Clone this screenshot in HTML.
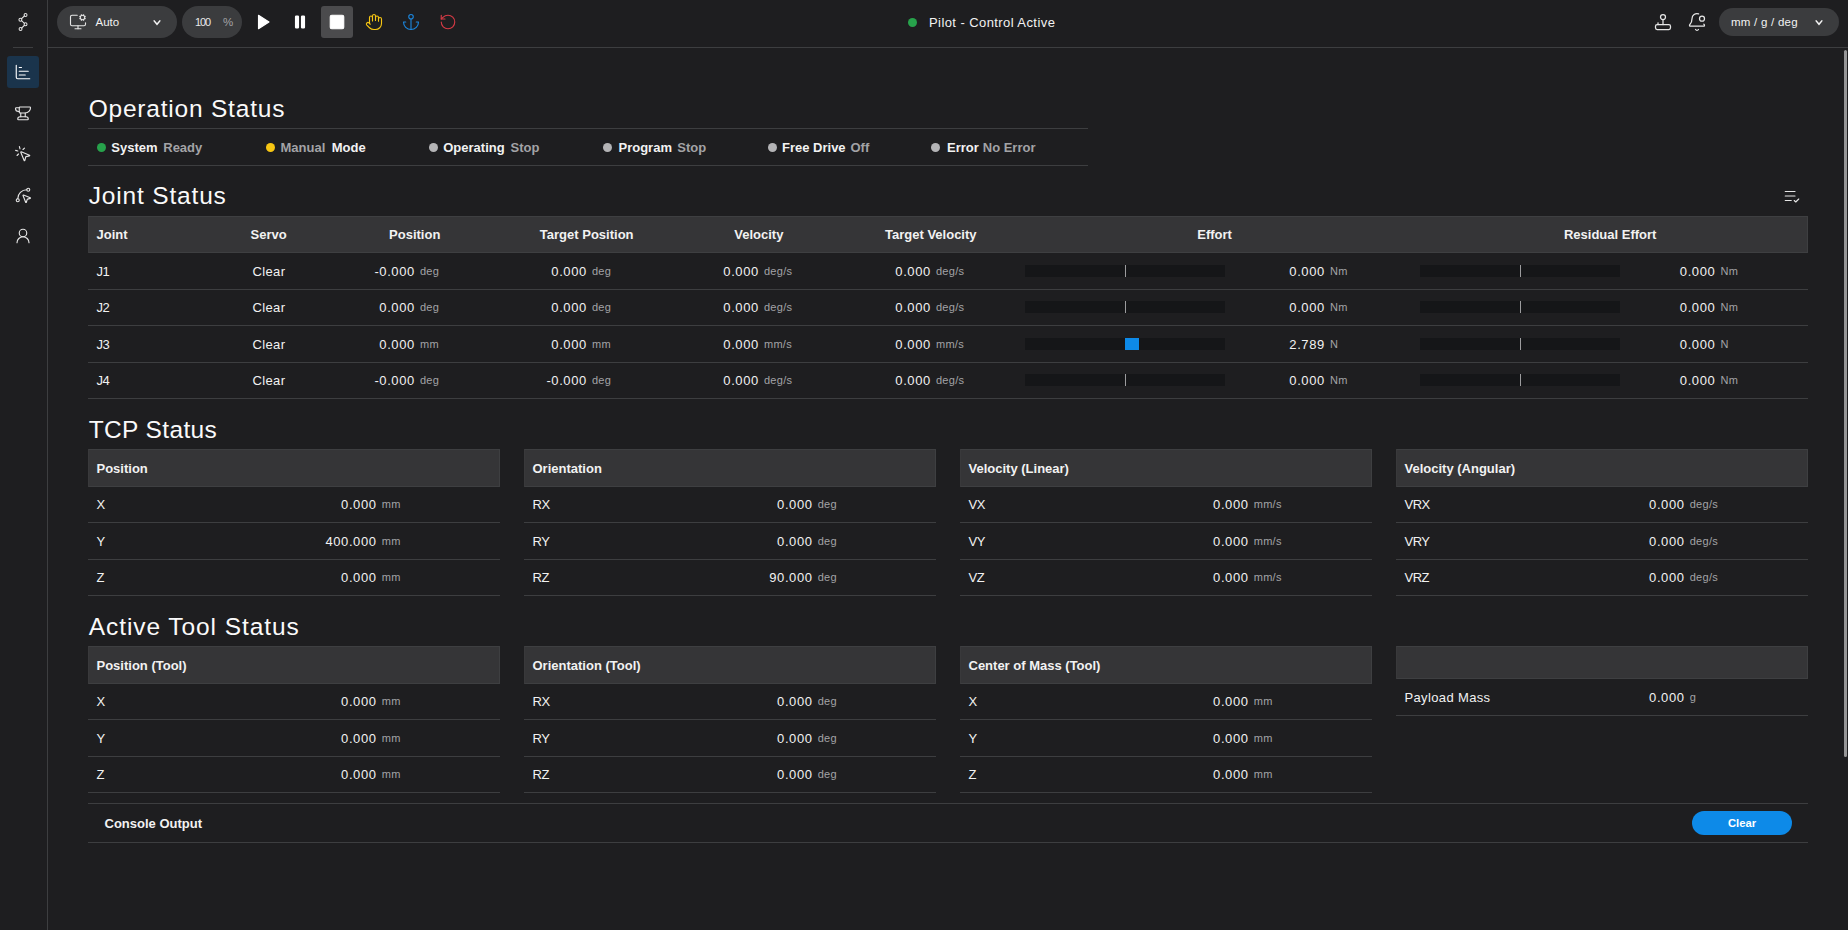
<!DOCTYPE html>
<html lang="en"><head><meta charset="utf-8"><title>Pilot - Control Active</title>
<style>
*{box-sizing:border-box;margin:0;padding:0}
html,body{width:1848px;height:930px;overflow:hidden;background:#1e1e20}
body{position:relative;font-family:"Liberation Sans",sans-serif;font-size:13px;line-height:20px;color:#f2f2f2;letter-spacing:.36px}
.abs,.ic,.t,.ln,.box{position:absolute}
.ic svg{display:block}
.t{white-space:nowrap;line-height:20px}
.b{font-weight:700;letter-spacing:0}
.u{font-size:11px;color:#a3a3a6;letter-spacing:.3px}
.m{color:#a3a3a6}
.ln{height:1px;background:#3d3e40}
.h{font-size:24.5px;line-height:32px;letter-spacing:.8px;color:#fafafa}
.hd{background:#353537;border:1px solid #3e3f41;border-left-color:#39393b}
.dot{position:absolute;width:9px;height:9px;border-radius:50%}
.bar{position:absolute;width:200px;height:12px;background:#151618}
.tick{position:absolute;width:1px;height:12px;background:#9c9c9e}
.r{text-align:right;letter-spacing:.6px}
.k{letter-spacing:-.5px}
.c{text-align:center}
</style></head>
<body>
<div class="ln" style="left:47px;top:0;width:1px;height:930px"></div>
<div class="ln" style="left:48px;top:47px;width:1800px"></div>
<div class="ln" style="left:13px;top:47px;width:20px"></div>
<span class="ic" style="left:11px;top:10px;width:24px;height:24px"><svg width="24" height="24" viewBox="0 0 24 24" fill="none" stroke="#e4e4e4" stroke-width="1.05" stroke-linecap="round"><circle cx="14.55" cy="4.95" r="1.45"/><circle cx="9.4" cy="9.75" r="1.45"/><circle cx="14.55" cy="14.25" r="1.45"/><circle cx="9.55" cy="19.05" r="1.45"/><path d="M13.5 5.95 10.45 8.75M10.5 10.7 13.45 13.3M13.5 15.25 10.6 18.05"/></svg></span>
<div class="box" style="left:7px;top:56px;width:32px;height:32px;border-radius:3px;background:#1a344c"></div>
<span class="ic" style="left:14.0px;top:63.0px;width:18px;height:18px"><svg width="18" height="18" viewBox="0 0 24 24" fill="none" stroke="#ffffff" stroke-width="1.5" stroke-linecap="round" stroke-linejoin="round" ><path d="M3 3v16a2 2 0 0 0 2 2h16"/><path d="M7 16h8"/><path d="M7 11h12"/><path d="M7 6h3"/></svg></span>
<span class="ic" style="left:14.0px;top:104.0px;width:18px;height:18px"><svg width="18" height="18" viewBox="0 0 24 24" fill="none" stroke="#e6e6e6" stroke-width="1.5" stroke-linecap="round" stroke-linejoin="round" ><path d="M7 10H6a4 4 0 0 1-4-4 1 1 0 0 1 1-1h4"/><path d="M7 5a1 1 0 0 1 1-1h13a1 1 0 0 1 1 1 7 7 0 0 1-7 7H8a1 1 0 0 1-1-1z"/><path d="M9 12v5"/><path d="M15 12v5"/><path d="M5 20a3 3 0 0 1 3-3h8a3 3 0 0 1 3 3 1 1 0 0 1-1 1H6a1 1 0 0 1-1-1"/></svg></span>
<span class="ic" style="left:14.0px;top:145.0px;width:18px;height:18px"><svg width="18" height="18" viewBox="0 0 24 24" fill="none" stroke="#e6e6e6" stroke-width="1.5" stroke-linecap="round" stroke-linejoin="round" ><path d="M14 4.1 12 6"/><path d="m5.1 8-2.9-.8"/><path d="m6 12-1.9 2"/><path d="M7.2 2.2 8 5.1"/><path d="M9.037 9.69a.498.498 0 0 1 .653-.653l11 4.5a.5.5 0 0 1-.074.949l-4.349 1.041a1 1 0 0 0-.74.739l-1.04 4.35a.5.5 0 0 1-.95.074z"/></svg></span>
<span class="ic" style="left:14.0px;top:186.0px;width:18px;height:18px"><svg width="18" height="18" viewBox="0 0 24 24" fill="none" stroke="#e6e6e6" stroke-width="1.5" stroke-linecap="round" stroke-linejoin="round" ><path d="M12.034 12.681a.498.498 0 0 1 .647-.647l9 3.5a.5.5 0 0 1-.033.943l-3.444 1.068a1 1 0 0 0-.66.66l-1.067 3.443a.5.5 0 0 1-.943.033z"/><path d="M5 17A12 12 0 0 1 17 5"/><circle cx="19" cy="5" r="2"/><circle cx="5" cy="19" r="2"/></svg></span>
<span class="ic" style="left:14.0px;top:227.0px;width:18px;height:18px"><svg width="18" height="18" viewBox="0 0 24 24" fill="none" stroke="#e6e6e6" stroke-width="1.5" stroke-linecap="round" stroke-linejoin="round" ><circle cx="12" cy="8" r="5"/><path d="M20 21a8 8 0 0 0-16 0"/></svg></span>
<div class="box" style="left:57px;top:6px;width:120px;height:32px;border-radius:16px;background:#3b3c3e"></div>
<span class="ic" style="left:69.0px;top:13.0px;width:18px;height:18px"><svg width="18" height="18" viewBox="0 0 24 24" fill="none" stroke="#e6e6e6" stroke-width="1.5" stroke-linecap="round" stroke-linejoin="round" ><path d="M12 17v4"/><path d="m14.305 7.53.923-.382"/><path d="m15.228 4.852-.923-.383"/><path d="m16.852 3.228-.383-.924"/><path d="m16.852 8.772-.383.923"/><path d="m19.148 3.228.383-.924"/><path d="m19.53 9.696-.382-.924"/><path d="m20.772 4.852.924-.383"/><path d="m20.772 7.148.924.383"/><path d="M22 13v2a2 2 0 0 1-2 2H4a2 2 0 0 1-2-2V5a2 2 0 0 1 2-2h7"/><path d="M8 21h8"/><circle cx="18" cy="6" r="3"/></svg></span>
<div class="t" style="left:95.5px;top:12px;font-size:11.5px;letter-spacing:0">Auto</div>
<span class="ic" style="left:151px;top:16.5px;width:12px;height:12px"><svg width="12" height="12" viewBox="0 0 12 12" fill="none" stroke="#f4f4f4" stroke-width="1.5" stroke-linecap="square" stroke-linejoin="miter"><path d="M3.2 3.95 6 7.3 8.8 3.95"/></svg></span>
<div class="box" style="left:182px;top:6px;width:60px;height:32px;border-radius:16px;background:#3b3c3e"></div>
<div class="t" style="left:195px;top:12px;font-size:11px;letter-spacing:-1.1px;color:#e8e8e8">100</div>
<div class="t" style="left:223px;top:12px;font-size:11.5px;letter-spacing:0;color:#a3a3a6">%</div>
<span class="ic" style="left:254.0px;top:13.0px;width:18px;height:18px"><svg width="18" height="18" viewBox="0 0 24 24" fill="#fff" stroke="#fff" stroke-width="1.5" stroke-linecap="round" stroke-linejoin="round" ><polygon points="6 3 20 12 6 21 6 3"/></svg></span>
<span class="ic" style="left:291.0px;top:13.0px;width:18px;height:18px"><svg width="18" height="18" viewBox="0 0 24 24" fill="#fff" stroke="#fff" stroke-width="1.5" stroke-linecap="round" stroke-linejoin="round" ><rect x="14" y="4" width="4" height="16" rx="1"/><rect x="6" y="4" width="4" height="16" rx="1"/></svg></span>
<div class="box" style="left:321px;top:6px;width:32px;height:32px;border-radius:3px;background:#4b4b4d"></div>
<span class="ic" style="left:328.0px;top:13.0px;width:18px;height:18px"><svg width="18" height="18" viewBox="0 0 24 24" fill="#fff" stroke="#fff" stroke-width="1.5" stroke-linecap="round" stroke-linejoin="round" ><rect width="18" height="18" x="3" y="3" rx="2"/></svg></span>
<span class="ic" style="left:365.0px;top:13.0px;width:18px;height:18px"><svg width="18" height="18" viewBox="0 0 24 24" fill="none" stroke="#f7c613" stroke-width="1.5" stroke-linecap="round" stroke-linejoin="round" ><path d="M18 11V6a2 2 0 0 0-2-2a2 2 0 0 0-2 2"/><path d="M14 10V4a2 2 0 0 0-2-2a2 2 0 0 0-2 2v2"/><path d="M10 10.5V6a2 2 0 0 0-2-2a2 2 0 0 0-2 2v8"/><path d="M18 8a2 2 0 1 1 4 0v6a8 8 0 0 1-8 8h-2c-2.8 0-4.5-.86-5.99-2.34l-3.6-3.6a2 2 0 0 1 2.83-2.82L7 15"/></svg></span>
<span class="ic" style="left:402.0px;top:13.0px;width:18px;height:18px"><svg width="18" height="18" viewBox="0 0 24 24" fill="none" stroke="#1b86dd" stroke-width="1.5" stroke-linecap="round" stroke-linejoin="round" ><circle cx="12" cy="5" r="3"/><line x1="12" x2="12" y1="22" y2="8"/><path d="M5 12H2a10 10 0 0 0 20 0h-3"/></svg></span>
<span class="ic" style="left:439.0px;top:13.0px;width:18px;height:18px"><svg width="18" height="18" viewBox="0 0 24 24" fill="none" stroke="#d63a45" stroke-width="1.5" stroke-linecap="round" stroke-linejoin="round" ><path d="M3 12a9 9 0 1 0 9-9 9.75 9.75 0 0 0-6.74 2.74L3 8"/><path d="M3 3v5h5"/></svg></span>
<div class="dot" style="left:908px;top:17.5px;background:#27a24b"></div>
<div class="t" style="left:929px;top:12.5px;letter-spacing:.42px">Pilot - Control Active</div>
<span class="ic" style="left:1653.0px;top:12.0px;width:20px;height:20px"><svg width="20" height="20" viewBox="0 0 24 24" fill="none" stroke="#e6e6e6" stroke-width="1.5" stroke-linecap="round" stroke-linejoin="round" ><path d="M21 17a2 2 0 0 0-2-2H5a2 2 0 0 0-2 2v2a2 2 0 0 0 2 2h14a2 2 0 0 0 2-2v-2Z"/><path d="M6 15v-2"/><path d="M12 15V9"/><circle cx="12" cy="6" r="3"/></svg></span>
<span class="ic" style="left:1687.0px;top:12.0px;width:20px;height:20px"><svg width="20" height="20" viewBox="0 0 24 24" fill="none" stroke="#e6e6e6" stroke-width="1.5" stroke-linecap="round" stroke-linejoin="round" ><path d="M10.268 21a2 2 0 0 0 3.464 0"/><path d="M13.916 2.314A6 6 0 0 0 6 8c0 4.499-1.411 5.956-2.74 7.327A1 1 0 0 0 4 17h16a1 1 0 0 0 .74-1.673 9 9 0 0 1-.585-.665"/><circle cx="18" cy="8" r="3"/></svg></span>
<div class="box" style="left:1719px;top:8px;width:120px;height:28px;border-radius:14px;background:#3b3c3e"></div>
<div class="t" style="left:1731px;top:12px;font-size:11.5px;letter-spacing:.25px">mm / g / deg</div>
<span class="ic" style="left:1813.1px;top:16.5px;width:12px;height:12px"><svg width="12" height="12" viewBox="0 0 12 12" fill="none" stroke="#f4f4f4" stroke-width="1.5" stroke-linecap="square" stroke-linejoin="miter"><path d="M3.2 3.95 6 7.3 8.8 3.95"/></svg></span>
<div class="box" style="left:1844px;top:50px;width:3px;height:707px;border-radius:1.5px;background:#969697"></div>
<div class="t h" style="left:88.7px;top:92.5px;letter-spacing:.79px">Operation Status</div>
<div class="ln" style="left:88px;top:128px;width:1000px"></div>
<div class="ln" style="left:88px;top:165px;width:1000px"></div>
<div class="dot" style="left:96.5px;top:142.6px;background:#27a24b"></div>
<div class="t b" style="left:111.25px;top:137.5px">System</div>
<div class="t b m" style="left:163.25px;top:137.5px">Ready</div>
<div class="dot" style="left:265.6px;top:142.6px;background:#f7c613"></div>
<div class="t b m" style="left:280.5px;top:137.5px">Manual</div>
<div class="t b" style="left:331.75px;top:137.5px">Mode</div>
<div class="dot" style="left:428.5px;top:142.6px;background:#b4b4b6"></div>
<div class="t b" style="left:443.25px;top:137.5px">Operating</div>
<div class="t b m" style="left:510.5px;top:137.5px">Stop</div>
<div class="dot" style="left:603.4px;top:142.6px;background:#b4b4b6"></div>
<div class="t b" style="left:618.5px;top:137.5px">Program</div>
<div class="t b m" style="left:677.25px;top:137.5px">Stop</div>
<div class="dot" style="left:767.6px;top:142.6px;background:#b4b4b6"></div>
<div class="t b" style="left:782px;top:137.5px">Free Drive</div>
<div class="t b m" style="left:850.5px;top:137.5px">Off</div>
<div class="dot" style="left:931.4px;top:142.6px;background:#b4b4b6"></div>
<div class="t b" style="left:947px;top:137.5px">Error</div>
<div class="t b m" style="left:982.75px;top:137.5px">No Error</div>
<div class="t h" style="left:88.7px;top:180px;letter-spacing:.83px">Joint Status</div>
<span class="ic" style="left:1783.0px;top:186.8px;width:18px;height:18px"><svg width="18" height="18" viewBox="0 0 24 24" fill="none" stroke="#e6e6e6" stroke-width="1.5" stroke-linecap="round" stroke-linejoin="round" ><path d="M11 18H3"/><path d="m15 18 2 2 4-4"/><path d="M16 12H3"/><path d="M16 6H3"/></svg></span>
<div class="box hd" style="left:88px;top:216px;width:1720px;height:37px"></div>
<div class="t b" style="left:96.5px;top:224.5px">Joint</div>
<div class="t b c" style="left:168.7px;width:200px;top:224.5px">Servo</div>
<div class="t b c" style="left:314.7px;width:200px;top:224.5px">Position</div>
<div class="t b c" style="left:486.70000000000005px;width:200px;top:224.5px">Target Position</div>
<div class="t b c" style="left:658.8px;width:200px;top:224.5px">Velocity</div>
<div class="t b c" style="left:830.8px;width:200px;top:224.5px">Target Velocity</div>
<div class="t b c" style="left:1114.6px;width:200px;top:224.5px">Effort</div>
<div class="t b c" style="left:1510.2px;width:200px;top:224.5px">Residual Effort</div>
<div class="t k" style="left:96.5px;top:261.5px">J1</div>
<div class="t c" style="left:168.75px;width:200.42px;top:261.5px">Clear</div>
<div class="t r" style="left:294.25px;width:120.6px;top:261.5px">-0.000</div>
<div class="t u" style="left:419.95px;top:260.5px">deg</div>
<div class="t r" style="left:466.25px;width:120.6px;top:261.5px">0.000</div>
<div class="t u" style="left:591.95px;top:260.5px">deg</div>
<div class="t r" style="left:638.25px;width:120.6px;top:261.5px">0.000</div>
<div class="t u" style="left:763.95px;top:260.5px">deg/s</div>
<div class="t r" style="left:810.25px;width:120.6px;top:261.5px">0.000</div>
<div class="t u" style="left:935.95px;top:260.5px">deg/s</div>
<div class="bar" style="left:1025px;top:265px"></div>
<div class="tick" style="left:1125px;top:265px"></div>
<div class="t r" style="left:1204.25px;width:120.6px;top:261.5px">0.000</div>
<div class="t u" style="left:1329.95px;top:260.5px">Nm</div>
<div class="bar" style="left:1420px;top:265px"></div>
<div class="tick" style="left:1520px;top:265px"></div>
<div class="t r" style="left:1594.75px;width:120.6px;top:261.5px">0.000</div>
<div class="t u" style="left:1720.45px;top:260.5px">Nm</div>
<div class="ln" style="left:88px;top:289px;width:1720px"></div>
<div class="t k" style="left:96.5px;top:298.0px">J2</div>
<div class="t c" style="left:168.75px;width:200.42px;top:298.0px">Clear</div>
<div class="t r" style="left:294.25px;width:120.6px;top:298.0px">0.000</div>
<div class="t u" style="left:419.95px;top:297.0px">deg</div>
<div class="t r" style="left:466.25px;width:120.6px;top:298.0px">0.000</div>
<div class="t u" style="left:591.95px;top:297.0px">deg</div>
<div class="t r" style="left:638.25px;width:120.6px;top:298.0px">0.000</div>
<div class="t u" style="left:763.95px;top:297.0px">deg/s</div>
<div class="t r" style="left:810.25px;width:120.6px;top:298.0px">0.000</div>
<div class="t u" style="left:935.95px;top:297.0px">deg/s</div>
<div class="bar" style="left:1025px;top:301px"></div>
<div class="tick" style="left:1125px;top:301px"></div>
<div class="t r" style="left:1204.25px;width:120.6px;top:298.0px">0.000</div>
<div class="t u" style="left:1329.95px;top:297.0px">Nm</div>
<div class="bar" style="left:1420px;top:301px"></div>
<div class="tick" style="left:1520px;top:301px"></div>
<div class="t r" style="left:1594.75px;width:120.6px;top:298.0px">0.000</div>
<div class="t u" style="left:1720.45px;top:297.0px">Nm</div>
<div class="ln" style="left:88px;top:325px;width:1720px"></div>
<div class="t k" style="left:96.5px;top:334.5px">J3</div>
<div class="t c" style="left:168.75px;width:200.42px;top:334.5px">Clear</div>
<div class="t r" style="left:294.25px;width:120.6px;top:334.5px">0.000</div>
<div class="t u" style="left:419.95px;top:333.5px">mm</div>
<div class="t r" style="left:466.25px;width:120.6px;top:334.5px">0.000</div>
<div class="t u" style="left:591.95px;top:333.5px">mm</div>
<div class="t r" style="left:638.25px;width:120.6px;top:334.5px">0.000</div>
<div class="t u" style="left:763.95px;top:333.5px">mm/s</div>
<div class="t r" style="left:810.25px;width:120.6px;top:334.5px">0.000</div>
<div class="t u" style="left:935.95px;top:333.5px">mm/s</div>
<div class="bar" style="left:1025px;top:338px"></div>
<div class="box" style="left:1125px;top:338px;width:14px;height:12px;background:#0d8ae8"></div>
<div class="t r" style="left:1204.25px;width:120.6px;top:334.5px">2.789</div>
<div class="t u" style="left:1329.95px;top:333.5px">N</div>
<div class="bar" style="left:1420px;top:338px"></div>
<div class="tick" style="left:1520px;top:338px"></div>
<div class="t r" style="left:1594.75px;width:120.6px;top:334.5px">0.000</div>
<div class="t u" style="left:1720.45px;top:333.5px">N</div>
<div class="ln" style="left:88px;top:362px;width:1720px"></div>
<div class="t k" style="left:96.5px;top:371.0px">J4</div>
<div class="t c" style="left:168.75px;width:200.42px;top:371.0px">Clear</div>
<div class="t r" style="left:294.25px;width:120.6px;top:371.0px">-0.000</div>
<div class="t u" style="left:419.95px;top:370.0px">deg</div>
<div class="t r" style="left:466.25px;width:120.6px;top:371.0px">-0.000</div>
<div class="t u" style="left:591.95px;top:370.0px">deg</div>
<div class="t r" style="left:638.25px;width:120.6px;top:371.0px">0.000</div>
<div class="t u" style="left:763.95px;top:370.0px">deg/s</div>
<div class="t r" style="left:810.25px;width:120.6px;top:371.0px">0.000</div>
<div class="t u" style="left:935.95px;top:370.0px">deg/s</div>
<div class="bar" style="left:1025px;top:374px"></div>
<div class="tick" style="left:1125px;top:374px"></div>
<div class="t r" style="left:1204.25px;width:120.6px;top:371.0px">0.000</div>
<div class="t u" style="left:1329.95px;top:370.0px">Nm</div>
<div class="bar" style="left:1420px;top:374px"></div>
<div class="tick" style="left:1520px;top:374px"></div>
<div class="t r" style="left:1594.75px;width:120.6px;top:371.0px">0.000</div>
<div class="t u" style="left:1720.45px;top:370.0px">Nm</div>
<div class="ln" style="left:88px;top:398px;width:1720px"></div>
<div class="t h" style="left:88.7px;top:413.5px;letter-spacing:.37px">TCP Status</div>
<div class="box hd" style="left:88px;top:449px;width:412px;height:38px"></div>
<div class="t b" style="left:96.5px;top:458.75px">Position</div>
<div class="t k" style="left:96.5px;top:494.5px">X</div>
<div class="t r" style="left:256px;width:120.6px;top:494.5px">0.000</div>
<div class="t u" style="left:381.7px;top:493.5px">mm</div>
<div class="ln" style="left:88px;top:522px;width:412px"></div>
<div class="t k" style="left:96.5px;top:531.5px">Y</div>
<div class="t r" style="left:256px;width:120.6px;top:531.5px">400.000</div>
<div class="t u" style="left:381.7px;top:530.5px">mm</div>
<div class="ln" style="left:88px;top:559px;width:412px"></div>
<div class="t k" style="left:96.5px;top:567.5px">Z</div>
<div class="t r" style="left:256px;width:120.6px;top:567.5px">0.000</div>
<div class="t u" style="left:381.7px;top:566.5px">mm</div>
<div class="ln" style="left:88px;top:595px;width:412px"></div>
<div class="box hd" style="left:524px;top:449px;width:412px;height:38px"></div>
<div class="t b" style="left:532.5px;top:458.75px">Orientation</div>
<div class="t k" style="left:532.5px;top:494.5px">RX</div>
<div class="t r" style="left:692px;width:120.6px;top:494.5px">0.000</div>
<div class="t u" style="left:817.7px;top:493.5px">deg</div>
<div class="ln" style="left:524px;top:522px;width:412px"></div>
<div class="t k" style="left:532.5px;top:531.5px">RY</div>
<div class="t r" style="left:692px;width:120.6px;top:531.5px">0.000</div>
<div class="t u" style="left:817.7px;top:530.5px">deg</div>
<div class="ln" style="left:524px;top:559px;width:412px"></div>
<div class="t k" style="left:532.5px;top:567.5px">RZ</div>
<div class="t r" style="left:692px;width:120.6px;top:567.5px">90.000</div>
<div class="t u" style="left:817.7px;top:566.5px">deg</div>
<div class="ln" style="left:524px;top:595px;width:412px"></div>
<div class="box hd" style="left:960px;top:449px;width:412px;height:38px"></div>
<div class="t b" style="left:968.5px;top:458.75px">Velocity (Linear)</div>
<div class="t k" style="left:968.5px;top:494.5px">VX</div>
<div class="t r" style="left:1128px;width:120.6px;top:494.5px">0.000</div>
<div class="t u" style="left:1253.7px;top:493.5px">mm/s</div>
<div class="ln" style="left:960px;top:522px;width:412px"></div>
<div class="t k" style="left:968.5px;top:531.5px">VY</div>
<div class="t r" style="left:1128px;width:120.6px;top:531.5px">0.000</div>
<div class="t u" style="left:1253.7px;top:530.5px">mm/s</div>
<div class="ln" style="left:960px;top:559px;width:412px"></div>
<div class="t k" style="left:968.5px;top:567.5px">VZ</div>
<div class="t r" style="left:1128px;width:120.6px;top:567.5px">0.000</div>
<div class="t u" style="left:1253.7px;top:566.5px">mm/s</div>
<div class="ln" style="left:960px;top:595px;width:412px"></div>
<div class="box hd" style="left:1396px;top:449px;width:412px;height:38px"></div>
<div class="t b" style="left:1404.5px;top:458.75px">Velocity (Angular)</div>
<div class="t k" style="left:1404.5px;top:494.5px">VRX</div>
<div class="t r" style="left:1564px;width:120.6px;top:494.5px">0.000</div>
<div class="t u" style="left:1689.7px;top:493.5px">deg/s</div>
<div class="ln" style="left:1396px;top:522px;width:412px"></div>
<div class="t k" style="left:1404.5px;top:531.5px">VRY</div>
<div class="t r" style="left:1564px;width:120.6px;top:531.5px">0.000</div>
<div class="t u" style="left:1689.7px;top:530.5px">deg/s</div>
<div class="ln" style="left:1396px;top:559px;width:412px"></div>
<div class="t k" style="left:1404.5px;top:567.5px">VRZ</div>
<div class="t r" style="left:1564px;width:120.6px;top:567.5px">0.000</div>
<div class="t u" style="left:1689.7px;top:566.5px">deg/s</div>
<div class="ln" style="left:1396px;top:595px;width:412px"></div>
<div class="t h" style="left:88.7px;top:610.5px;letter-spacing:.93px">Active Tool Status</div>
<div class="box hd" style="left:88px;top:646px;width:412px;height:38px"></div>
<div class="t b" style="left:96.5px;top:655.5px">Position (Tool)</div>
<div class="t k" style="left:96.5px;top:691.5px">X</div>
<div class="t r" style="left:256px;width:120.6px;top:691.5px">0.000</div>
<div class="t u" style="left:381.7px;top:690.5px">mm</div>
<div class="ln" style="left:88px;top:719px;width:412px"></div>
<div class="t k" style="left:96.5px;top:728.5px">Y</div>
<div class="t r" style="left:256px;width:120.6px;top:728.5px">0.000</div>
<div class="t u" style="left:381.7px;top:727.5px">mm</div>
<div class="ln" style="left:88px;top:756px;width:412px"></div>
<div class="t k" style="left:96.5px;top:764.5px">Z</div>
<div class="t r" style="left:256px;width:120.6px;top:764.5px">0.000</div>
<div class="t u" style="left:381.7px;top:763.5px">mm</div>
<div class="ln" style="left:88px;top:792px;width:412px"></div>
<div class="box hd" style="left:524px;top:646px;width:412px;height:38px"></div>
<div class="t b" style="left:532.5px;top:655.5px">Orientation (Tool)</div>
<div class="t k" style="left:532.5px;top:691.5px">RX</div>
<div class="t r" style="left:692px;width:120.6px;top:691.5px">0.000</div>
<div class="t u" style="left:817.7px;top:690.5px">deg</div>
<div class="ln" style="left:524px;top:719px;width:412px"></div>
<div class="t k" style="left:532.5px;top:728.5px">RY</div>
<div class="t r" style="left:692px;width:120.6px;top:728.5px">0.000</div>
<div class="t u" style="left:817.7px;top:727.5px">deg</div>
<div class="ln" style="left:524px;top:756px;width:412px"></div>
<div class="t k" style="left:532.5px;top:764.5px">RZ</div>
<div class="t r" style="left:692px;width:120.6px;top:764.5px">0.000</div>
<div class="t u" style="left:817.7px;top:763.5px">deg</div>
<div class="ln" style="left:524px;top:792px;width:412px"></div>
<div class="box hd" style="left:960px;top:646px;width:412px;height:38px"></div>
<div class="t b" style="left:968.5px;top:655.5px">Center of Mass (Tool)</div>
<div class="t k" style="left:968.5px;top:691.5px">X</div>
<div class="t r" style="left:1128px;width:120.6px;top:691.5px">0.000</div>
<div class="t u" style="left:1253.7px;top:690.5px">mm</div>
<div class="ln" style="left:960px;top:719px;width:412px"></div>
<div class="t k" style="left:968.5px;top:728.5px">Y</div>
<div class="t r" style="left:1128px;width:120.6px;top:728.5px">0.000</div>
<div class="t u" style="left:1253.7px;top:727.5px">mm</div>
<div class="ln" style="left:960px;top:756px;width:412px"></div>
<div class="t k" style="left:968.5px;top:764.5px">Z</div>
<div class="t r" style="left:1128px;width:120.6px;top:764.5px">0.000</div>
<div class="t u" style="left:1253.7px;top:763.5px">mm</div>
<div class="ln" style="left:960px;top:792px;width:412px"></div>
<div class="box hd" style="left:1396px;top:646px;width:412px;height:33px"></div>
<div class="t" style="left:1404.5px;top:687.5px">Payload Mass</div>
<div class="t r" style="left:1564px;width:120.6px;top:687.5px">0.000</div>
<div class="t u" style="left:1689.7px;top:686.5px">g</div>
<div class="ln" style="left:1396px;top:715px;width:412px"></div>
<div class="ln" style="left:88px;top:803px;width:1720px"></div>
<div class="ln" style="left:88px;top:842px;width:1720px"></div>
<div class="t b" style="left:104.5px;top:813.5px">Console Output</div>
<div class="box" style="left:1692px;top:811px;width:100px;height:24px;border-radius:12px;background:#0d8ae8"></div>
<div class="t b c" style="left:1692px;width:100px;top:813px;font-size:11.25px;color:#fff">Clear</div>
</body></html>
